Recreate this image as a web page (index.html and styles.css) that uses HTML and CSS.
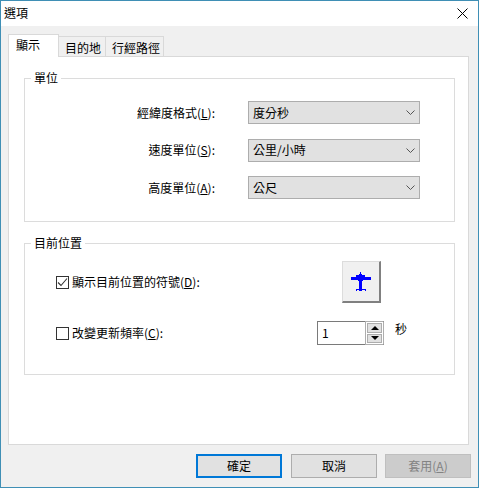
FILE: index.html
```html
<!DOCTYPE html>
<html lang="zh-Hant">
<head>
    <meta charset="UTF-8">
    <meta name="viewport" content="width=device-width, initial-scale=1.0">
    <title>選項</title>
    <link rel="stylesheet" href="styles.css">
</head>
<body>
    <div class="dialog">
        <div class="titlebar">
            <span>選項</span>
            <svg class="close-icon" width="11" height="11" viewBox="0 0 11 11">
                <path d="M0.5 0.5L10.5 10.5M10.5 0.5L0.5 10.5" stroke="#000" stroke-width="1" fill="none"/>
            </svg>
        </div>

        <div class="content">
            <div class="tabs">
                <div class="tab active">顯示</div>
                <div class="tab tab-target">目的地</div>
                <div class="tab tab-route">行經路徑</div>
            </div>

            <div class="panel">
                <fieldset class="group units">
                    <legend>單位</legend>
                    <div class="unit-row">
                        <label>經緯度格式(<u>L</u>):</label>
                        <div class="combo">
                            <span>度分秒</span>
                            <svg width="9" height="5" viewBox="0 0 9 5"><path d="M0.5 0.5L4.5 4.5L8.5 0.5" stroke="#555" fill="none"/></svg>
                        </div>
                    </div>
                    <div class="unit-row">
                        <label>速度單位(<u>S</u>):</label>
                        <div class="combo">
                            <span>公里/小時</span>
                            <svg width="9" height="5" viewBox="0 0 9 5"><path d="M0.5 0.5L4.5 4.5L8.5 0.5" stroke="#555" fill="none"/></svg>
                        </div>
                    </div>
                    <div class="unit-row">
                        <label>高度單位(<u>A</u>):</label>
                        <div class="combo">
                            <span>公尺</span>
                            <svg width="9" height="5" viewBox="0 0 9 5"><path d="M0.5 0.5L4.5 4.5L8.5 0.5" stroke="#555" fill="none"/></svg>
                        </div>
                    </div>
                </fieldset>

                <fieldset class="group position">
                    <legend>目前位置</legend>
                    <div class="pos-row">
                        <label class="check">
                            <span class="box">
                                <svg width="11" height="11" viewBox="0 0 11 11"><path d="M1 5.5L4 8.5L10 1.5" stroke="#333" stroke-width="1.1" fill="none"/></svg>
                            </span>
                            <span>顯示目前位置的符號(<u>D</u>):</span>
                        </label>
                        <div class="symbol-btn">
                            <svg width="20" height="19" viewBox="0 0 20 19" shape-rendering="crispEdges">
                                <path fill="#0000ff" d="M9 0h1v2h-1zM8 2h3v1h-3zM5 3h9v2h-9zM0 5h20v3h-20zM7 8h5v1h-5zM8 9h3v8h-3zM5 17h10v1h-10zM5 18h1v1h-1zM14 18h1v1h-1zM8 18h3v1h-3z"/>
                            </svg>
                        </div>
                    </div>
                    <div class="pos-row">
                        <label class="check">
                            <span class="box"></span>
                            <span>改變更新頻率(<u>C</u>):</span>
                        </label>
                        <div class="spin-wrap">
                            <div class="spin">
                                <span class="spin-value">1</span>
                                <div class="spin-btns">
                                    <div class="spin-btn"><i class="arrow-up"></i></div>
                                    <div class="spin-btn"><i class="arrow-down"></i></div>
                                </div>
                            </div>
                            <span class="spin-unit">秒</span>
                        </div>
                    </div>
                </fieldset>
            </div>

            <div class="footer">
                <button class="default">確定</button>
                <button>取消</button>
                <button class="disabled">套用(<u>A</u>)</button>
            </div>
        </div>
    </div>
</body>
</html>
```

FILE: styles.css
```css
* {
    box-sizing: border-box;
    margin: 0;
    padding: 0;
}

body {
    font-family: "Noto Sans CJK TC", "Open Sans", sans-serif;
    font-size: 12px;
    line-height: 16px;
    color: #000;
    background-color: #fff;
}

.dialog {
    width: 479px;
    height: 488px;
    border: 1px solid #3f8fb5;
    display: flex;
    flex-direction: column;
    overflow: hidden;
}

.titlebar {
    height: 25px;
    background-color: #fff;
    display: flex;
    align-items: center;
    justify-content: space-between;
    padding: 0 10px 1px 3px;
}

.close-icon {
    margin-top: 1px;
}

.content {
    flex: 1;
    background-color: #f0f0f0;
    padding: 8px 7px 0 7px;
}

.tabs {
    display: flex;
    align-items: flex-end;
    height: 23px;
    margin-bottom: -1px;
}

.tab {
    height: 21px;
    padding: 3px 0 0 6px;
    border: 1px solid #d9d9d9;
    border-left: none;
    border-bottom: none;
    position: relative;
}

.tab.active {
    height: 23px;
    width: 51px;
    padding: 2px 0 0 7px;
    background-color: #fff;
    border-left: 1px solid #d9d9d9;
    z-index: 1;
}

.tab-target {
    width: 47px;
}

.tab-route {
    width: 58px;
}

.panel {
    width: 461px;
    height: 389px;
    background-color: #fff;
    border: 1px solid #d9d9d9;
    padding: 13px 13px 0 15px;
}

.group {
    border: 1px solid #dcdcdc;
    min-width: 0;
}

.group legend {
    margin-left: 6px;
    padding: 0 3px;
}

.units {
    height: 152px;
    padding-top: 15px;
    display: flex;
    flex-direction: column;
    gap: 14.5px;
    margin-bottom: 13px;
}

.unit-row {
    display: grid;
    grid-template-columns: 190px 172px;
    column-gap: 33px;
    align-items: center;
}

.unit-row label {
    text-align: right;
}

.combo {
    height: 23px;
    background-color: #e1e1e1;
    border: 1px solid #adadad;
    display: flex;
    align-items: center;
    justify-content: space-between;
    padding: 0 4px 0 4px;
}

.position {
    height: 140px;
    padding-top: 10px;
}

.pos-row {
    display: grid;
    grid-template-columns: 261px 1fr;
    align-items: center;
    margin: 0 0 18px 31px;
}

.check {
    display: flex;
    align-items: center;
    gap: 3px;
}

.box {
    width: 13px;
    height: 13px;
    border: 1px solid #333;
    background-color: #fff;
    display: flex;
}

.symbol-btn {
    width: 39px;
    height: 42px;
    margin-left: 25px;
    background-color: #f0f0f0;
    border: 1px solid #dcdcdc;
    border-right: 2px solid #808080;
    border-bottom: 2px solid #808080;
    display: flex;
    align-items: center;
    justify-content: center;
}

.spin-wrap {
    display: flex;
    align-items: center;
    gap: 11px;
}

.spin {
    width: 67px;
    height: 24px;
    border: 1px solid #7a7a7a;
    border-right-color: #adadad;
    display: flex;
    justify-content: space-between;
}

.spin-value {
    padding: 3px 0 0 4px;
}

.spin-unit {
    margin-bottom: 8px;
}

.spin-btns {
    width: 18px;
    border-left: 1px solid #adadad;
    margin: -1px 0;
    border-top: 1px solid #adadad;
    border-bottom: 1px solid #adadad;
    padding: 1px;
    display: flex;
    flex-direction: column;
    gap: 1px;
}

.spin-btn {
    flex: 1;
    background-color: #e1e1e1;
    border: 1px solid #adadad;
    display: flex;
    align-items: center;
    justify-content: center;
}

.arrow-up {
    border-left: 4px solid transparent;
    border-right: 4px solid transparent;
    border-bottom: 4px solid #000;
}

.arrow-down {
    border-left: 4px solid transparent;
    border-right: 4px solid transparent;
    border-top: 4px solid #000;
}

.footer {
    display: flex;
    justify-content: flex-end;
    gap: 8px;
    margin-top: 9px;
}

button {
    width: 86px;
    height: 24px;
    font-family: inherit;
    font-size: 12px;
    line-height: 16px;
    color: #000;
    background-color: #e1e1e1;
    border: 1px solid #adadad;
}

button.default {
    border: 2px solid #0078d7;
    margin-right: 1px;
}

button.disabled {
    background-color: #ccc;
    border-color: #bfbfbf;
    color: #838383;
}
```
